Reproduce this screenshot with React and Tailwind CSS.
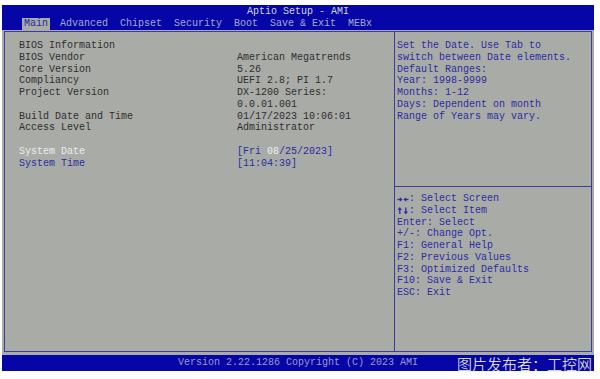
import React from 'react';

const mono = { fontFamily: '"Liberation Mono", "DejaVu Sans Mono", monospace' };

const tabs = ['Main', 'Advanced', 'Chipset', 'Security', 'Boot', 'Save & Exit', 'MEBx'];

const info = [
  ['BIOS Information', ''],
  ['BIOS Vendor', 'American Megatrends'],
  ['Core Version', '5.26'],
  ['Compliancy', 'UEFI 2.8; PI 1.7'],
  ['Project Version', 'DX-1200 Series:'],
  ['', '0.0.01.001'],
  ['Build Date and Time', '01/17/2023 10:06:01'],
  ['Access Level', 'Administrator'],
];

const help = [
  'Set the Date. Use Tab to',
  'switch between Date elements.',
  'Default Ranges:',
  'Year: 1998-9999',
  'Months: 1-12',
  'Days: Dependent on month',
  'Range of Years may vary.',
];

// two little arrow glyphs as drawn by the BIOS font
function Arrows({ kind }) {
  return (
    <svg width="12" height="11" viewBox="0 0 12 11" className="mt-[0.5px]" fill="currentColor" stroke="currentColor">
      {kind === 'lr' ? (
        <>
          <path d="M0.5 5.5h3" strokeWidth="1.3" />
          <path d="M2.8 3.2 L5.6 5.5 L2.8 7.8 Z" stroke="none" />
          <path d="M8.5 5.5h3" strokeWidth="1.3" />
          <path d="M9.2 3.2 L6.4 5.5 L9.2 7.8 Z" stroke="none" />
        </>
      ) : (
        <>
          <path d="M2.8 4v5" strokeWidth="1.3" />
          <path d="M0.6 5 L2.8 2 L5 5 Z" stroke="none" />
          <path d="M8.8 2.5v5" strokeWidth="1.3" />
          <path d="M6.6 6.5 L8.8 9.5 L11 6.5 Z" stroke="none" />
        </>
      )}
    </svg>
  );
}

const keys = [
  ['lr', ': Select Screen'],
  ['ud', ': Select Item'],
  ['', 'Enter: Select'],
  ['', '+/-: Change Opt.'],
  ['', 'F1: General Help'],
  ['', 'F2: Previous Values'],
  ['', 'F3: Optimized Defaults'],
  ['', 'F10: Save & Exit'],
  ['', 'ESC: Exit'],
];

export default function App() {
  return (
    <div className="w-[600px] h-[379px] bg-white relative overflow-hidden" style={mono}>
      <div className="absolute left-[2px] top-[5px] w-[592px] flex flex-col text-[10px] leading-[11.75px]">
        {/* Title + tabs */}
        <div className="h-[25px] bg-[#0606a6] flex flex-col pt-[1px]">
          <div className="h-[11px] text-center text-[#d4d4dc] leading-[11px]">Aptio Setup - AMI</div>
          <div className="flex pl-[20px] gap-[8px] mt-[1px]">
            {tabs.map((t, i) => (
              <span
                key={t}
                className={
                  i === 0
                    ? 'bg-[#a9aba7] text-[#2a2aa0] px-[2px] h-[12px] leading-[12px]'
                    : 'text-[#a6a8d4] px-[2px] h-[12px] leading-[12px]'
                }
              >
                {t}
              </span>
            ))}
          </div>
        </div>

        {/* Body */}
        <div className="h-[325px] bg-[#a9aba7] px-[2px] pt-[1px] pb-[3px] flex">
          <div className="flex-1 flex border-[1.5px] border-[#3c3c9c]">
            {/* Left panel */}
            <div className="w-[390px] border-r-[1.5px] border-[#3c3c9c] pl-[14px] pt-[8px] text-[#2e2e2e]">
              {info.map(([k, v], i) => (
                <div key={i} className="flex h-[11.75px]">
                  <span className="w-[218px]">{k}</span>
                  <span>{v}</span>
                </div>
              ))}
              <div className="h-[11.75px]" />
              <div className="flex h-[11.75px]">
                <span className="w-[218px] text-[#ececec]">System Date</span>
                <span className="text-[#2c2ca4]">
                  [Fri <span className="text-[#f0f0f0]">08</span>/25/2023]
                </span>
              </div>
              <div className="flex h-[11.75px] text-[#2c2ca4]">
                <span className="w-[218px]">System Time</span>
                <span>[11:04:39]</span>
              </div>
            </div>

            {/* Right panel */}
            <div className="flex-1 flex flex-col text-[#2c2ca4]">
              <div className="h-[154px] pl-[2px] pt-[8px]">
                {help.map((l) => (
                  <div key={l} className="h-[11.75px] whitespace-pre">{l}</div>
                ))}
              </div>
              <div className="border-t-[1.5px] border-[#3c3c9c] pl-[2px] pt-[6px]">
                {keys.map(([a, l]) => (
                  <div key={l} className="h-[11.75px] whitespace-pre flex">
                    {a && <Arrows kind={a} />}
                    <span>{l}</span>
                  </div>
                ))}
              </div>
            </div>
          </div>
        </div>

        {/* Footer */}
        <div className="h-[16px] bg-[#0606a6] text-center text-[#9a9acc] leading-[16px]">
          Version 2.22.1286 Copyright (C) 2023 AMI
        </div>
      </div>

      {/* Watermark */}
      <div
        className="absolute left-[457px] top-[354px] text-[15px] leading-[20px] text-[#f4f4f4] font-light"
        style={{
          fontFamily: '"Noto Sans CJK SC", "Noto Sans", sans-serif',
          textShadow: '0 0 1px rgba(80,80,80,0.6)',
        }}
      >
        图片发布者：工控网
      </div>
    </div>
  );
}
